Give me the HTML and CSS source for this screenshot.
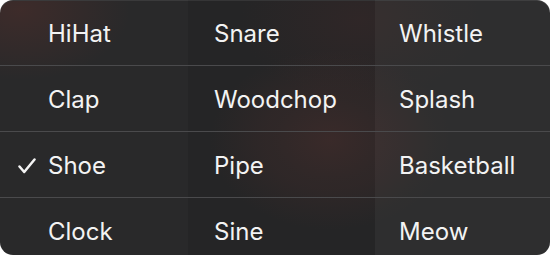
FILE: index.html
```html
<!DOCTYPE html>
<html>
<head>
<meta charset="utf-8">
<link rel="stylesheet" href="styles.css">
</head>
<body>
<div class="menu">
  <div class="col col-1">
    <div class="item">HiHat</div>
    <div class="item">Clap</div>
    <div class="item selected"><svg class="check" viewBox="0 0 18 16" width="18" height="16"><polyline points="1.5,8.5 6.2,14 16.5,1.5" fill="none" stroke="#f4f4f4" stroke-width="2.5" stroke-linecap="round" stroke-linejoin="round"/></svg>Shoe</div>
    <div class="item">Clock</div>
  </div>
  <div class="col col-2">
    <div class="item">Snare</div>
    <div class="item">Woodchop</div>
    <div class="item">Pipe</div>
    <div class="item">Sine</div>
  </div>
  <div class="col col-3">
    <div class="item">Whistle</div>
    <div class="item">Splash</div>
    <div class="item">Basketball</div>
    <div class="item">Meow</div>
  </div>
</div>
</body>
</html>
```
FILE: styles.css
```css
html, body {
  margin: 0;
  padding: 0;
  background: #ffffff;
}
.menu {
  width: 550px;
  height: 255px;
  border-radius: 13px;
  overflow: hidden;
  display: grid;
  grid-template-columns: 188px 187px 175px;
  background:
    radial-gradient(ellipse 120px 90px at 330px 140px, rgba(80, 50, 48, 0.55), rgba(80, 50, 48, 0) 100%),
    radial-gradient(ellipse 110px 70px at 20px 10px, rgba(75, 45, 42, 0.6), rgba(75, 45, 42, 0) 100%),
    radial-gradient(ellipse 120px 80px at 360px 20px, rgba(70, 45, 45, 0.35), rgba(70, 45, 45, 0) 100%),
    #29292a;
  font-family: "Inter", "Noto Sans", sans-serif;
  font-size: 24px;
  color: #f3f3f3;
  box-shadow: inset 0 1px 0 #3a3a3b;
}
.col {
  display: flex;
  flex-direction: column;
}
.col-2 {
  background: rgba(0, 0, 0, 0.08);
}
.col-3 {
  background: rgba(255, 255, 255, 0.025);
}
.item {
  flex: 0 0 66px;
  box-sizing: border-box;
  display: flex;
  align-items: center;
  padding-top: 1px;
  border-bottom: 1px solid #4a4a4c;
}
.item:last-child {
  border-bottom: none;
}
.col-1 .item {
  padding-left: 48px;
}
.col-2 .item {
  padding-left: 26px;
}
.col-3 .item {
  padding-left: 24px;
}
.col-1 .item.selected {
  padding-left: 18px;
}
.check {
  margin-right: 12px;
  margin-top: 2px;
  flex: none;
}
```
